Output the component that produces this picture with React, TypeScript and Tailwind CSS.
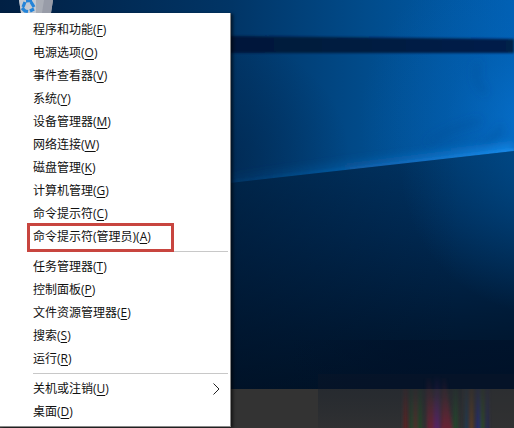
type MenuEntry = {
  label: string;
  accessKey: string;
  highlighted?: boolean;
  submenu?: boolean;
};

const groups: MenuEntry[][] = [
  [
    { label: "程序和功能", accessKey: "F" },
    { label: "电源选项", accessKey: "O" },
    { label: "事件查看器", accessKey: "V" },
    { label: "系统", accessKey: "Y" },
    { label: "设备管理器", accessKey: "M" },
    { label: "网络连接", accessKey: "W" },
    { label: "磁盘管理", accessKey: "K" },
    { label: "计算机管理", accessKey: "G" },
    { label: "命令提示符", accessKey: "C" },
    { label: "命令提示符(管理员)", accessKey: "A", highlighted: true },
  ],
  [
    { label: "任务管理器", accessKey: "T" },
    { label: "控制面板", accessKey: "P" },
    { label: "文件资源管理器", accessKey: "E" },
    { label: "搜索", accessKey: "S" },
    { label: "运行", accessKey: "R" },
  ],
  [
    { label: "关机或注销", accessKey: "U", submenu: true },
    { label: "桌面", accessKey: "D" },
  ],
];

function Wallpaper() {
  return (
    <svg
      className="absolute inset-0 h-full w-full"
      viewBox="0 0 514 428"
      preserveAspectRatio="none"
      aria-hidden="true"
    >
      <defs>
        <linearGradient id="sky" x1="0" x2="1" y1="0" y2="0">
          <stop offset="0" stopColor="#012044" />
          <stop offset="0.45" stopColor="#013566" />
          <stop offset="0.72" stopColor="#014c8c" />
          <stop offset="1" stopColor="#0060b4" />
        </linearGradient>
        <radialGradient id="glow" gradientUnits="userSpaceOnUse" cx="530" cy="120" r="170">
          <stop offset="0" stopColor="#0a78d8" stopOpacity="0.6" />
          <stop offset="0.5" stopColor="#0564b8" stopOpacity="0.3" />
          <stop offset="1" stopColor="#0564b8" stopOpacity="0" />
        </radialGradient>
        <radialGradient id="shade" gradientUnits="userSpaceOnUse" cx="230" cy="160" r="120">
          <stop offset="0" stopColor="#001c3c" stopOpacity="0.4" />
          <stop offset="1" stopColor="#001c3c" stopOpacity="0" />
        </radialGradient>
        <linearGradient id="bar" x1="0" x2="1" y1="0" y2="0">
          <stop offset="0.4" stopColor="#001838" />
          <stop offset="1" stopColor="#00204a" />
        </linearGradient>
        <linearGradient id="beam" gradientUnits="userSpaceOnUse" x1="230" x2="514" y1="0" y2="0">
          <stop offset="0" stopColor="#0a4580" stopOpacity="0.2" />
          <stop offset="0.5" stopColor="#0d68b8" stopOpacity="0.6" />
          <stop offset="1" stopColor="#1c8cec" stopOpacity="0.9" />
        </linearGradient>
        <linearGradient id="floor" gradientUnits="userSpaceOnUse" x1="400" y1="160" x2="420" y2="390">
          <stop offset="0" stopColor="#003566" />
          <stop offset="0.3" stopColor="#002a54" />
          <stop offset="0.7" stopColor="#001b38" />
          <stop offset="1" stopColor="#001226" />
        </linearGradient>
        <linearGradient id="floorSide" gradientUnits="userSpaceOnUse" x1="230" x2="460" y1="0" y2="0">
          <stop offset="0" stopColor="#001024" stopOpacity="0.45" />
          <stop offset="1" stopColor="#001024" stopOpacity="0" />
        </linearGradient>
        <radialGradient id="floorGlow" gradientUnits="userSpaceOnUse" cx="550" cy="165" r="150">
          <stop offset="0" stopColor="#0064b4" stopOpacity="0.5" />
          <stop offset="1" stopColor="#0064b4" stopOpacity="0" />
        </radialGradient>
        <linearGradient id="band" gradientUnits="userSpaceOnUse" x1="290" x2="400" y1="0" y2="0">
          <stop offset="0" stopColor="#001129" stopOpacity="0" />
          <stop offset="1" stopColor="#001129" stopOpacity="0.65" />
        </linearGradient>
        <filter id="soft" x="-5%" y="-20%" width="110%" height="140%">
          <feGaussianBlur stdDeviation="1" />
        </filter>
        <filter id="haze" x="-50%" y="-50%" width="200%" height="200%">
          <feGaussianBlur stdDeviation="4" />
        </filter>
      </defs>
      <rect width="514" height="428" fill="url(#sky)" />
      <rect width="514" height="210" fill="url(#shade)" />
      <rect width="514" height="200" fill="url(#glow)" />
      <path
        d="M428 143q22-16 52-22M478 62q-6 22 8 30M480 148q14-6 22-22"
        fill="none"
        stroke="#004a94"
        strokeOpacity="0.4"
        strokeWidth="5"
        filter="url(#haze)"
      />
      <path d="M230 181 514 148" stroke="url(#beam)" strokeWidth="9" filter="url(#haze)" />
      <path d="M0 33 230 36 514 39V53H0Z" fill="url(#bar)" filter="url(#soft)" />
      <path d="M230 182 514 150" stroke="url(#beam)" strokeWidth="3" filter="url(#soft)" />
      <path d="M0 208 230 183 514 151V428H0Z" fill="url(#floor)" />
      <path d="M0 208 230 183 514 151V428H0Z" fill="url(#floorSide)" />
      <path d="M230 183 514 151V340H230Z" fill="url(#floorGlow)" />
      <path d="M290 340H514V389H290Z" fill="url(#band)" />
    </svg>
  );
}

function RecycleBin() {
  return (
    <svg className="ml-[18px] block h-[13px] w-9" viewBox="0 0 36 13" role="img" aria-label="回收站">
      <path d="M1 0H35L33 13H3Z" fill="#a9adb6" />
      <path d="M1 0H18V13H3Z" fill="#c3c9d2" />
      <path d="M26 0H35L33 13H24Z" fill="#989ca8" />
      <path
        d="M5 7 7 2M4 8l3 3 3 .5M8 1l6-.5M13 2l3 5M16 9l-4 2"
        fill="none"
        stroke="#2384d8"
        strokeWidth="3.2"
      />
    </svg>
  );
}

function Taskbar() {
  return (
    <div className="absolute inset-x-0 bottom-0 h-[39px] bg-[#333333]">
      <svg
        className="absolute right-0 bottom-0 h-[54px] w-[196px]"
        viewBox="0 0 196 54"
        preserveAspectRatio="none"
        aria-hidden="true"
      >
        <defs>
          <linearGradient id="smudge" x1="0" x2="0" y1="0" y2="1">
            <stop offset="0" stopColor="#20262e" stopOpacity="0.65" />
            <stop offset="1" stopColor="#2f3032" stopOpacity="0.8" />
          </linearGradient>
          <linearGradient id="fade" x1="0" x2="0" y1="0" y2="1">
            <stop offset="0" stopColor="#fff" stopOpacity="0" />
            <stop offset="0.4" stopColor="#fff" stopOpacity="0.25" />
            <stop offset="1" stopColor="#fff" stopOpacity="0.9" />
          </linearGradient>
          <mask id="fadeMask">
            <rect width="196" height="54" fill="url(#fade)" />
          </mask>
          <filter id="smear" x="-10%" width="120%">
            <feGaussianBlur stdDeviation="1.5 0.5" />
          </filter>
        </defs>
        <rect width="196" height="15" fill="#0c1628" fillOpacity="0.45" />
        <rect y="15" width="196" height="39" fill="url(#smudge)" />
        <rect x="144" y="15" width="52" height="39" fill="#333333" fillOpacity="0.45" />
        <g mask="url(#fadeMask)" filter="url(#smear)">
          <path d="M85 15h5v39h-5z" fill="#5c2420" />
          <path d="M92 15h3v39h-3zM100 15h4v39h-4z" fill="#214a28" />
          <path d="M96 15h3v39h-3z" fill="#573026" />
          <path d="M113 4h-5l1 50h10z" fill="#6b2035" />
          <path d="M116 2h6v52h-6z" fill="#5a2468" />
          <path d="M124 4h4l6 50h-11z" fill="#6d2034" />
          <path d="M135 15h5v39h-5z" fill="#244629" />
          <path d="M147 15h3v39h-3z" fill="#1d3a58" />
          <path d="M152 15h3v39h-3z" fill="#693f20" />
          <path d="M158 15h4v39h-4z" fill="#222c78" />
          <path d="M163 15h3v39h-3z" fill="#2c5027" />
          <path d="M168 15h3v39h-3z" fill="#24285c" />
        </g>
      </svg>
    </div>
  );
}

function MenuItem({ label, accessKey, highlighted, submenu }: MenuEntry) {
  return (
    <li role="none" className="relative">
      <button
        type="button"
        role="menuitem"
        aria-haspopup={submenu ? "menu" : undefined}
        className="flex h-[23px] w-full items-center justify-between pr-2 pl-[33px] text-left hover:bg-[#e5e5e5]"
      >
        <span className="whitespace-nowrap">
          {label}(<span className="underline underline-offset-2">{accessKey}</span>)
        </span>
        {submenu && (
          <svg className="h-3 w-3" viewBox="0 0 12 12" fill="none" stroke="#222" aria-hidden="true">
            <path d="M3.5.5 9 6l-5.5 5.5" />
          </svg>
        )}
      </button>
      {highlighted && (
        <span className="pointer-events-none absolute -top-0.5 left-[27px] h-[29px] w-[147px] border-3 border-[#c8453f]" />
      )}
    </li>
  );
}

export default function App() {
  return (
    <main className="relative min-h-screen overflow-hidden bg-[#001128] font-['Open_Sans','Noto_Sans_CJK_SC',sans-serif] text-xs text-[#111]">
      <Wallpaper />
      <Taskbar />
      <div className="relative">
        <RecycleBin />
        <ul
          role="menu"
          className="w-[231px] border-r border-b border-[#8a8a8a] bg-white pt-[5px] pb-[3px] shadow-[2px_1px_3px_rgba(0,0,0,0.6)]"
        >
          {groups.map((group, i) => (
            <li key={i} role="none">
              {i > 0 && <hr className="my-[3px] mr-0.5 ml-[33px] border-[#c8c8c8]" />}
              <ul role="group">
                {group.map((item) => (
                  <MenuItem key={item.accessKey} {...item} />
                ))}
              </ul>
            </li>
          ))}
        </ul>
      </div>
    </main>
  );
}
